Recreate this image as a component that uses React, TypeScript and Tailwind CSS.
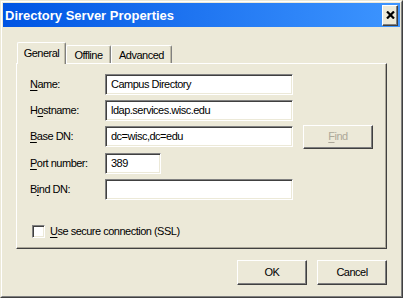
import React from 'react';

const font = { fontFamily: '"Liberation Sans", Arial, sans-serif' };

const sunken =
    'border border-t-[#808080] border-l-[#808080] border-r-white border-b-white shadow-[inset_1px_1px_0_#404040,inset_-1px_-1px_0_#ECE9D8] bg-white';
const raised =
    'border border-t-white border-l-white border-r-[#404040] border-b-[#404040] shadow-[inset_-1px_-1px_0_#808080] bg-[#ECE9D8]';

function Key({ children }: { children: React.ReactNode }) {
    return <span className="underline underline-offset-[2px]">{children}</span>;
}

type Field = {
    label: React.ReactNode;
    value: string;
    width: string;
    extra?: string;
    find?: boolean;
};

const fields: Field[] = [
    { label: <><Key>N</Key>ame:</>, value: 'Campus Directory', width: 'w-[188px]' },
    { label: <>H<Key>o</Key>stname:</>, value: 'ldap.services.wisc.edu', width: 'w-[188px]' },
    { label: <><Key>B</Key>ase DN:</>, value: 'dc=wisc,dc=edu', width: 'w-[188px]', find: true },
    { label: <><Key>P</Key>ort number:</>, value: '389', width: 'w-[56px]', extra: 'mt-px' },
    { label: <>B<Key>i</Key>nd DN:</>, value: '', width: 'w-[188px]' },
];

function Tab({ label, active, width }: { label: string; active?: boolean; width: string }) {
    return (
        <div
            className={`${width} flex items-start justify-center border-t border-l border-t-white border-l-white border-r border-r-[#808080] rounded-t-[2px] bg-[#ECE9D8] shadow-[inset_-1px_0_0_#C0BCA8] ${
                active ? 'h-[22px] -mb-px relative z-10 pt-[3px]' : 'h-[18px] pt-[2px]'
            }`}
        >
            <span className="leading-[14px]">{label}</span>
        </div>
    );
}

export default function App() {
    return (
        <div
            className="w-[403px] h-[298px] border border-t-[#ECE9D8] border-l-[#ECE9D8] border-r-[#404040] border-b-[#404040] text-[11px] tracking-[-0.5px] text-black select-none"
            style={font}
        >
            <div className="h-full border border-t-white border-l-white border-r-[#808080] border-b-[#808080] bg-[#ECE9D8] p-px flex flex-col">
                {/* Title bar */}
                <div className="h-[24px] shrink-0 flex items-center justify-between pl-[2px] pr-[2px] bg-gradient-to-r from-[#0054E3] to-[#3D95FF]">
                    <span className="text-white font-bold text-[13px] tracking-normal leading-none">
                        Directory Server Properties
                    </span>
                    <div className={`${raised} w-[16px] h-[21px] flex items-center justify-center`}>
                        <svg width="9" height="8" viewBox="0 0 9 8">
                            <path d="M1 0.5 L8 7.5 M8 0.5 L1 7.5" stroke="#000" strokeWidth="2.2" />
                        </svg>
                    </div>
                </div>

                {/* Body */}
                <div className="flex-1 px-[13px] pt-[15px]">
                    <div className="flex items-end h-[21px] pl-px">
                        <Tab label="General" active width="w-[49px]" />
                        <Tab label="Offline" width="w-[45px]" />
                        <Tab label="Advanced" width="w-[61px]" />
                    </div>

                    <div className="border border-t-white border-l-white border-r-[#404040] border-b-[#404040] shadow-[inset_-1px_-1px_0_#ACA899] pl-[13px] pt-[10px] pb-[10px] flex flex-col">
                        <div className="flex flex-col gap-[5px]">
                            {fields.map((f, i) => (
                                <div key={i} className={`flex items-center h-[21px] ${f.extra ?? ''}`}>
                                    <div className="w-[75px] shrink-0">{f.label}</div>
                                    <div className={`${sunken} ${f.width} h-[21px] pl-[5px] flex items-center`}>
                                        {f.value}
                                    </div>
                                    {f.find && (
                                        <div className={`${raised} ml-[10px] w-[70px] h-[24px] shrink-0 flex items-center justify-center text-[#ACA899]`}>
                                            <span><Key>F</Key>ind</span>
                                        </div>
                                    )}
                                </div>
                            ))}
                        </div>

                        <div className="flex items-center mt-[25px] h-[13px]">
                            <div className={`${sunken} w-[13px] h-[13px] ml-[2px]`} />
                            <span className="ml-[5px]"><Key>U</Key>se secure connection (SSL)</span>
                        </div>
                    </div>

                    <div className="flex justify-end gap-[10px] mt-[11px]">
                        <div className={`${raised} w-[70px] h-[25px] flex items-center justify-center`}>OK</div>
                        <div className={`${raised} w-[70px] h-[25px] flex items-center justify-center`}>Cancel</div>
                    </div>
                </div>
            </div>
        </div>
    );
}
